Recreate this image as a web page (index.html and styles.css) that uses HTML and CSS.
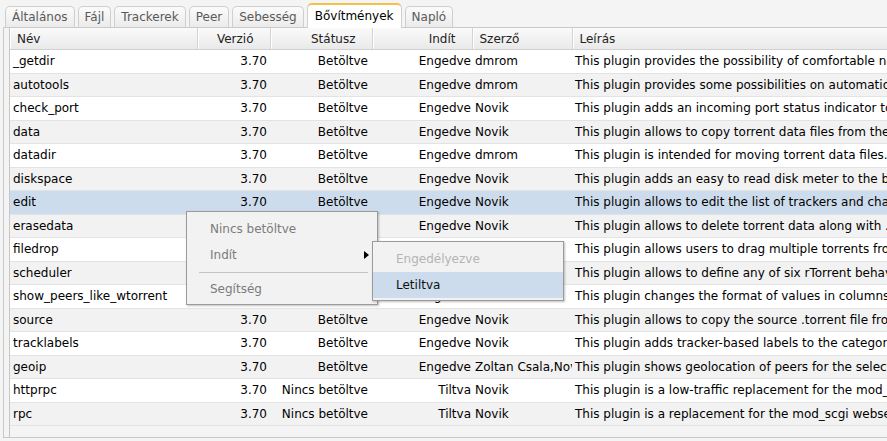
FILE: index.html
```html
<!DOCTYPE html>
<html lang="hu">
<head>
  <meta charset="UTF-8">
  <title>Bővítmények</title>
  <link rel="stylesheet" href="styles.css">
</head>
<body>
  <div class="app">
    <!-- Tab strip -->
    <ul class="tabs">
      <li class="tab">Általános</li>
      <li class="tab">Fájl</li>
      <li class="tab">Trackerek</li>
      <li class="tab">Peer</li>
      <li class="tab">Sebesség</li>
      <li class="tab active">Bővítmények</li>
      <li class="tab">Napló</li>
    </ul>

    <div class="panel">
      <div class="grid">
        <table class="plugins">
          <colgroup>
            <col class="c-name">
            <col class="c-ver">
            <col class="c-status">
            <col class="c-launch">
            <col class="c-author">
            <col class="c-descr">
          </colgroup>
          <thead>
            <tr>
              <th>Név</th>
              <th class="num">Verzió</th>
              <th class="num">Státusz</th>
              <th class="num">Indít</th>
              <th>Szerző</th>
              <th>Leírás</th>
            </tr>
          </thead>
          <tbody id="rows"></tbody>
        </table>
      </div>
    </div>
  </div>

  <!-- Context menu over the list -->
  <div class="menu">
    <div class="menu-item disabled">Nincs betöltve</div>
    <div class="menu-item has-sub">Indít
      <span class="arrow"></span>
      <div class="menu submenu">
        <div class="menu-item faded">Engedélyezve</div>
        <div class="menu-item hover">Letiltva</div>
      </div>
    </div>
    <div class="menu-sep"></div>
    <div class="menu-item disabled">Segítség</div>
  </div>

  <script>
    var plugins = [
      ["_getdir", "Betöltve", "Engedve", "dmrom", "This plugin provides the possibility of comfortable navigation on a host file system."],
      ["autotools", "Betöltve", "Engedve", "dmrom", "This plugin provides some possibilities on automation."],
      ["check_port", "Betöltve", "Engedve", "Novik", "This plugin adds an incoming port status indicator to the bottom bar."],
      ["data", "Betöltve", "Engedve", "Novik", "This plugin allows to copy torrent data files from the server to the local computer."],
      ["datadir", "Betöltve", "Engedve", "dmrom", "This plugin is intended for moving torrent data files."],
      ["diskspace", "Betöltve", "Engedve", "Novik", "This plugin adds an easy to read disk meter to the bottom bar."],
      ["edit", "Betöltve", "Engedve", "Novik", "This plugin allows to edit the list of trackers and change the comment of the current torrent."],
      ["erasedata", "Betöltve", "Engedve", "Novik", "This plugin allows to delete torrent data along with .torrent file."],
      ["filedrop", "Betöltve", "Engedve", "Novik", "This plugin allows users to drag multiple torrents from desktop to the browser."],
      ["scheduler", "Betöltve", "Engedve", "Novik", "This plugin allows to define any of six rTorrent behaviors at any particular hour."],
      ["show_peers_like_wtorrent", "Betöltve", "Engedve", "Novik", "This plugin changes the format of values in columns 'Seeds' and 'Peers'."],
      ["source", "Betöltve", "Engedve", "Novik", "This plugin allows to copy the source .torrent file from the server to the local computer."],
      ["tracklabels", "Betöltve", "Engedve", "Novik", "This plugin adds tracker-based labels to the category panel."],
      ["geoip", "Betöltve", "Engedve", "Zoltan Csala,Novik", "This plugin shows geolocation of peers for the selected torrent."],
      ["httprpc", "Nincs betöltve", "Tiltva", "Novik", "This plugin is a low-traffic replacement for the mod_scgi webserver module."],
      ["rpc", "Nincs betöltve", "Tiltva", "Novik", "This plugin is a replacement for the mod_scgi webserver module."]
    ];

    var tbody = document.getElementById('rows');
    plugins.forEach(function(p, i) {
      var tr = document.createElement('tr');
      if (i % 2 === 1) tr.className = 'odd';
      if (p[0] === 'edit') tr.className = 'selected';
      tr.innerHTML =
        '<td>' + p[0] + '</td>' +
        '<td class="num">3.70</td>' +
        '<td class="num status">' + p[1] + '</td>' +
        '<td class="num launch">' + p[2] + '</td>' +
        '<td class="author">' + p[3] + '</td>' +
        '<td class="descr">' + p[4] + '</td>';
      tbody.appendChild(tr);
    });
  </script>
</body>
</html>
```

FILE: styles.css
```css
body {
  margin: 0;
  background: #f4f4f4;
  font-family: "DejaVu Sans", Verdana, sans-serif;
  font-size: 12px;
  color: #000;
  overflow: hidden;
}
.app {
  width: 1000px;
  height: 441px;
  display: flex;
  flex-direction: column;
}
/* Tab strip */
.tabs {
  list-style: none;
  margin: 0;
  padding: 0 0 0 5px;
  height: 27px;
  display: flex;
  align-items: flex-end;
  gap: 3px;
}
.tab {
  height: 20px;
  line-height: 20px;
  padding: 0 6px;
  color: #5a5a5a;
  background: linear-gradient(#fbfbfb, #ebebeb);
  border: 1px solid #cfcfcf;
  border-bottom: none;
  border-radius: 5px 5px 0 0;
}
.tab.active {
  height: 23px;
  line-height: 23px;
  margin-bottom: -1px;
  color: #000;
  background: #fff;
  border-top: 2px solid #f3c04a;
  position: relative;
  z-index: 1;
  padding: 0 7px;
}
/* Panel with the plugin list */
.panel {
  flex: 1;
  margin: 0 0 3px 3px;
  border: 1px solid #c9c9c9;
  padding: 0 0 0 5px;
  display: flex;
  min-height: 0;
}
.grid {
  flex: 1;
  border-left: 1px solid #c6c6c6;
  background: #f4f4f4;
  overflow: hidden;
}
table.plugins {
  border-collapse: collapse;
  table-layout: fixed;
  width: 1000px;
}
.c-name { width: 187px; }
.c-ver { width: 73px; }
.c-status { width: 102px; }
.c-launch { width: 100px; }
.c-author { width: 100px; }
th, td {
  white-space: nowrap;
  overflow: hidden;
  text-align: left;
}
th {
  height: 21px;
  padding: 0 5px 0 7px;
  font-weight: normal;
  color: #222;
  background: linear-gradient(#fafafa, #e9e9e9);
  border-bottom: 1px solid #d0d0d0;
  border-right: 1px solid #d3d3d3;
  box-shadow: inset 1px 0 0 #fff;
}
th.num {
  text-align: right;
  padding-right: 16px;
}
td {
  height: 22.5px;
  padding: 0 3px;
  background: #fff;
  border-bottom: 1px solid #e3e3e3;
}
td.num { text-align: right; }
td.status { padding-right: 4px; }
td.launch { padding-right: 1px; }
td.author { padding-left: 3px; }
td.descr { padding-left: 3px; }
tr.odd td { background: #f2f2f2; }
tr.selected td { background: #cddcec; }
/* Context menu */
.menu {
  position: absolute;
  left: 186px;
  top: 211px;
  width: 190px;
  padding: 4px 0 2px;
  background: #f2f2f2;
  border: 1px solid #9a9a9a;
  box-shadow: 1px 1px 2px rgba(0, 0, 0, 0.25);
  z-index: 5;
}
.menu-item {
  position: relative;
  height: 26px;
  line-height: 26px;
  padding-left: 23px;
  color: #7b7b7b;
}
.menu-item.faded { color: #b4b4b4; }
.menu-item.hover {
  background: #cddcec;
  color: #111;
}
.arrow {
  position: absolute;
  right: 8px;
  top: 9px;
  width: 0;
  height: 0;
  border-top: 4px solid transparent;
  border-bottom: 4px solid transparent;
  border-left: 5px solid #000;
}
.menu-sep {
  height: 1px;
  margin: 4px 9px 3px 12px;
  background: #c4c4c4;
}
.submenu {
  left: 185px;
  top: -1px;
  width: 190px;
  padding: 4px 0 2px;
}
```
